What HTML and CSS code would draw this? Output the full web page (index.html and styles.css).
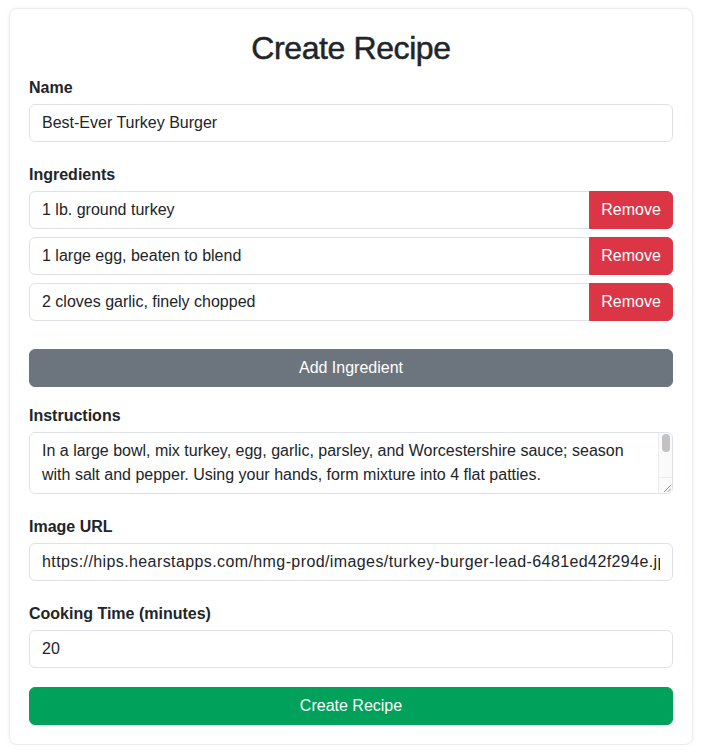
FILE: index.html
```html
<!DOCTYPE html>
<html lang="en">
<head>
<meta charset="utf-8">
<title>Create Recipe</title>
<link rel="stylesheet" href="styles.css">
</head>
<body>
<div class="page">
  <form class="card">
    <h2 class="title">Create Recipe</h2>

    <div class="group">
      <label class="label" for="name">Name</label>
      <input class="control" id="name" type="text" value="Best-Ever Turkey Burger">
    </div>

    <div class="group">
      <label class="label">Ingredients</label>
      <div class="ingredients">
        <div class="input-group">
          <input class="control" type="text" value="1 lb. ground turkey">
          <button class="btn btn-danger" type="button">Remove</button>
        </div>
        <div class="input-group">
          <input class="control" type="text" value="1 large egg, beaten to blend">
          <button class="btn btn-danger" type="button">Remove</button>
        </div>
        <div class="input-group">
          <input class="control" type="text" value="2 cloves garlic, finely chopped">
          <button class="btn btn-danger" type="button">Remove</button>
        </div>
      </div>
      <button class="btn btn-secondary btn-block add" type="button">Add Ingredient</button>
    </div>

    <div class="group after-btn">
      <label class="label" for="instructions">Instructions</label>
      <div class="textarea-wrap">
        <textarea class="control textarea" id="instructions" rows="2">In a large bowl, mix turkey, egg, garlic, parsley, and Worcestershire sauce; season with salt and pepper. Using your hands, form mixture into 4 flat patties.

Heat oil in a large skillet over medium-high heat. Cook patties until browned and cooked through, about 5 minutes per side.

Serve on buns with desired toppings.</textarea>
        <div class="scrollbar" aria-hidden="true">
          <div class="scroll-track"><div class="scroll-thumb"></div></div>
          <div class="scroll-corner">
            <svg class="resizer" width="8" height="8" viewBox="0 0 8 8">
              <path d="M1 8 L8 1 M4.5 8 L8 4.5" stroke="#8a8a8a" stroke-width="0.9" fill="none"/>
            </svg>
          </div>
        </div>
      </div>
    </div>

    <div class="group">
      <label class="label" for="image">Image URL</label>
      <input class="control url" id="image" type="text" value="https://hips.hearstapps.com/hmg-prod/images/turkey-burger-lead-6481ed42f294e.jpg">
    </div>

    <div class="group">
      <label class="label" for="time">Cooking Time (minutes)</label>
      <input class="control" id="time" type="text" value="20">
    </div>

    <button class="btn btn-success btn-block submit" type="button">Create Recipe</button>
  </form>
</div>
</body>
</html>
```

FILE: styles.css
```css
* { box-sizing: border-box; }

html, body {
  margin: 0;
  padding: 0;
  background: #ffffff;
}

body {
  font-family: "Liberation Sans", Arial, sans-serif;
  font-size: 16px;
  line-height: 1.5;
  color: #212529;
}

.page {
  padding: 8px 10px 0 9px;
}

.card {
  width: 684px;
  border: 1px solid #ececec;
  border-radius: 8px;
  box-shadow: 0 0 4px rgba(0, 0, 0, 0.05);
  padding: 20px 19px 19px 19px;
  display: flex;
  flex-direction: column;
}

.title {
  margin: 0 0 7px 0;
  font-size: 32px;
  font-weight: 400;
  line-height: 1.2;
  text-align: center;
  letter-spacing: -0.4px;
  color: #212529;
  -webkit-text-stroke: 0.5px #212529;
}

.group {
  display: flex;
  flex-direction: column;
  margin-bottom: 19px;
}

.label {
  font-weight: 700;
  line-height: 24px;
  margin-top: 2px;
  margin-bottom: 4px;
}

.control {
  display: block;
  width: 100%;
  height: 38px;
  padding: 6px 12px;
  font-family: inherit;
  font-size: 16px;
  line-height: 24px;
  color: #212529;
  background: #ffffff;
  border: 1px solid #dee2e6;
  border-radius: 6px;
  outline: none;
}

.url {
  letter-spacing: 0.4px;
}

.textarea-wrap {
  position: relative;
}

.textarea {
  height: 62px;
  padding-right: 28px;
  resize: none;
  overflow: hidden;
}

.scrollbar {
  position: absolute;
  top: 1px;
  right: 1px;
  bottom: 1px;
  width: 14px;
  border-left: 1px solid #ececec;
  background: #fafafa;
  border-radius: 0 5px 5px 0;
  display: flex;
  flex-direction: column;
}

.scroll-track {
  flex: 1;
  padding: 1px 2px 0 3px;
}

.scroll-thumb {
  height: 18px;
  background: #c2c2c2;
  border-radius: 4px;
}

.scroll-corner {
  height: 16px;
  border-top: 1px solid #ececec;
  position: relative;
}

.resizer {
  position: absolute;
  right: 1px;
  bottom: 1px;
}

.ingredients {
  display: flex;
  flex-direction: column;
  gap: 8px;
}

.input-group {
  display: flex;
}

.input-group .control {
  flex: 1;
  border-top-right-radius: 0;
  border-bottom-right-radius: 0;
}

.input-group .btn {
  border-top-left-radius: 0;
  border-bottom-left-radius: 0;
  margin-left: -1px;
  width: 84px;
  flex: none;
}

.btn {
  display: block;
  height: 38px;
  padding: 6px 11px;
  font-family: inherit;
  font-size: 16px;
  line-height: 24px;
  color: #ffffff;
  border: 1px solid transparent;
  border-radius: 6px;
  cursor: pointer;
  text-align: center;
}

.btn-block { width: 100%; }

.btn-danger {
  background: #dc3545;
  border-color: #dc3545;
}

.btn-secondary {
  background: #6c757d;
  border-color: #6c757d;
}

.btn-success {
  background: #00a15a;
  border-color: #00a15a;
}

.add {
  margin-top: 28px;
}

.after-btn { margin-top: -4px; }
```
